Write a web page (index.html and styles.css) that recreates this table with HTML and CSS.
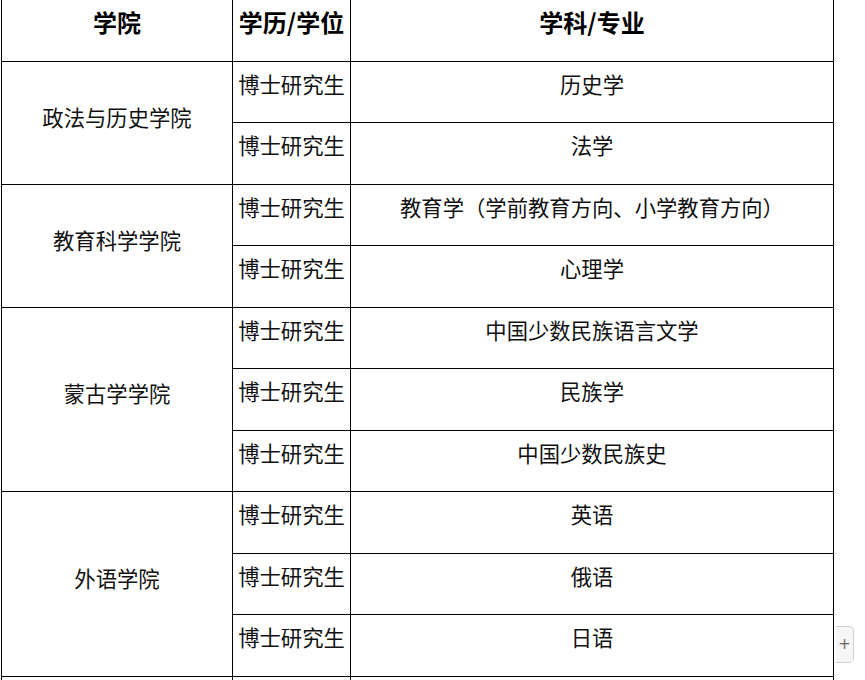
FILE: index.html
```html
<!DOCTYPE html>
<html lang="zh-CN">
<head>
<meta charset="utf-8">
<title>学科专业</title>
<link rel="stylesheet" href="styles.css">
</head>
<body>
<table class="majors">
  <colgroup>
    <col class="c1">
    <col class="c2">
    <col class="c3">
  </colgroup>
  <thead>
    <tr><th>学院</th><th>学历/学位</th><th>学科/专业</th></tr>
  </thead>
  <tbody>
    <tr><td class="college" rowspan="2">政法与历史学院</td><td>博士研究生</td><td>历史学</td></tr>
    <tr><td>博士研究生</td><td>法学</td></tr>
    <tr><td class="college" rowspan="2">教育科学学院</td><td>博士研究生</td><td>教育学（学前教育方向、小学教育方向）</td></tr>
    <tr><td>博士研究生</td><td>心理学</td></tr>
    <tr><td class="college" rowspan="3">蒙古学学院</td><td>博士研究生</td><td>中国少数民族语言文学</td></tr>
    <tr><td>博士研究生</td><td>民族学</td></tr>
    <tr><td>博士研究生</td><td>中国少数民族史</td></tr>
    <tr><td class="college" rowspan="3">外语学院</td><td>博士研究生</td><td>英语</td></tr>
    <tr><td>博士研究生</td><td>俄语</td></tr>
    <tr><td>博士研究生</td><td>日语</td></tr>
    <tr class="next"><td></td><td></td><td></td></tr>
  </tbody>
</table>
<button class="expand" type="button">+</button>
</body>
</html>
```

FILE: styles.css
```css
html, body {
  margin: 0;
  padding: 0;
  background: #fff;
  overflow: hidden;
}
body {
  width: 865px;
  height: 680px;
  position: relative;
  font-family: "Noto Sans CJK SC", "Noto Sans", sans-serif;
  color: #111;
}
.majors {
  border-collapse: collapse;
  table-layout: fixed;
  width: 832px;
  margin: -1px 0 0 1px;
  font-size: 21.33px;
}
.c1 { width: 231px; }
.c2 { width: 118px; }
.c3 { width: 483px; }
.majors tr {
  height: 61.5px;
}
.majors th,
.majors td {
  border: 1px solid #000;
  padding: 6px 0 0;
  line-height: 31px;
  text-align: center;
  vertical-align: top;
  white-space: nowrap;
  overflow: hidden;
}
.majors th {
  font-size: 24px;
  font-weight: bold;
  color: #000;
  padding-top: 6px;
  line-height: 32px;
}
.majors td.college {
  vertical-align: middle;
  padding: 0 0 13px;
}
.expand {
  position: absolute;
  left: 836px;
  top: 626px;
  width: 18px;
  height: 37px;
  padding: 0;
  border: 1px solid #cfcfcf;
  border-left: none;
  border-radius: 0 5px 5px 0;
  background: #f6f6f6;
  color: #666;
  font-family: "DejaVu Sans", sans-serif;
  font-size: 15px;
  line-height: 35px;
  text-align: center;
}
```
